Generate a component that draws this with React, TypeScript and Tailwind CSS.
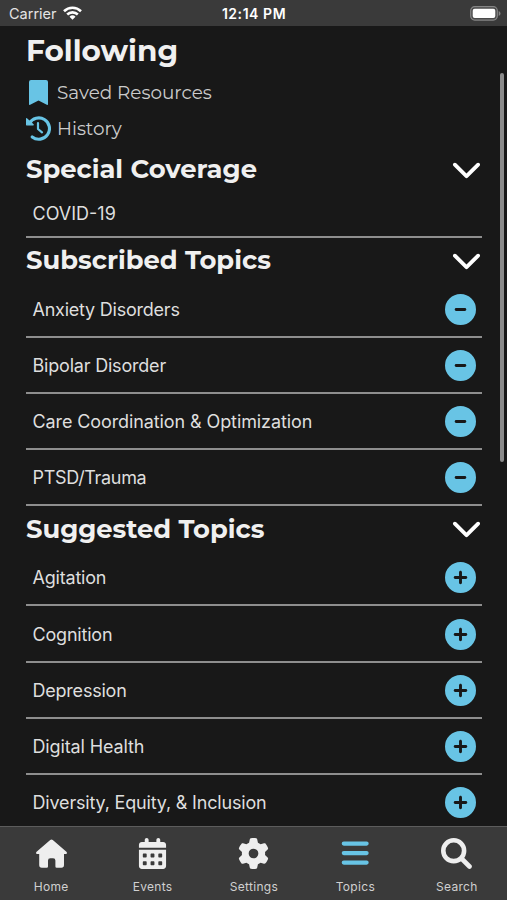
import React from 'react'
import { FaCalendarDays, FaChevronDown, FaCircleMinus, FaCirclePlus, FaGear } from 'react-icons/fa6'

interface Topic {
  name: string
  tracking: string
}

interface IconProps {
  className?: string
}

const subscribed: Topic[] = [
  { name: 'Anxiety Disorders', tracking: 'tracking-[-0.23px]' },
  { name: 'Bipolar Disorder', tracking: 'tracking-[-0.2px]' },
  { name: 'Care Coordination & Optimization', tracking: 'tracking-[-0.1px]' },
  { name: 'PTSD/Trauma', tracking: 'tracking-[-0.32px]' },
]

const suggested: Topic[] = [
  { name: 'Agitation', tracking: 'tracking-[-0.2px]' },
  { name: 'Cognition', tracking: 'tracking-[-0.2px]' },
  { name: 'Depression', tracking: 'tracking-[-0.22px]' },
  { name: 'Digital Health', tracking: 'tracking-[-0.12px]' },
  { name: 'Diversity, Equity, & Inclusion', tracking: 'tracking-[-0.18px]' },
]

const HomeIcon: React.FC<IconProps> = ({ className }) => (
  <svg viewBox="0 0 31 31" className={className} fill="currentColor">
    <path d="M14.2 2q1.3-1 2.6 0l13.6 11.8q.8.9.4 1.6t-1.4.7H28v11q0 2.6-2.6 2.6h-4.7q-1.3 0-1.3-1.3v-5.9q0-2.3-2.3-2.3h-2.8q-2.3 0-2.3 2.3v5.9q0 1.3-1.3 1.3H5.8q-2.6 0-2.6-2.6v-11H1.6q-1 0-1.4-.7t.4-1.6Z" />
  </svg>
)

const BarsIcon: React.FC<IconProps> = ({ className }) => (
  <svg viewBox="0 0 31 31" className={className} stroke="currentColor" strokeWidth="4.2" strokeLinecap="round">
    <path d="M3.8 5.6h22.8M3.8 15.1h22.8M3.8 24.6h22.8" />
  </svg>
)

const SearchIcon: React.FC<IconProps> = ({ className }) => (
  <svg viewBox="0 0 31 31" className={className} fill="none" stroke="currentColor" strokeLinecap="round">
    <circle cx="12.7" cy="12.7" r="10.4" strokeWidth="4.6" />
    <path d="m20.5 20.5 8 8" strokeWidth="4.6" />
  </svg>
)

const BookmarkIcon: React.FC<IconProps> = ({ className }) => (
  <svg viewBox="0 0 19 25" className={className} fill="currentColor">
    <path d="M2 0h15q2 0 2 2v22q0 1.3-1.2.7L9.5 20.4l-8.3 4.3Q0 25.3 0 24V2q0-2 2-2Z" />
  </svg>
)

const HistoryIcon: React.FC<IconProps> = ({ className }) => (
  <svg viewBox="0 0 25 25" className={className} fill="none" stroke="currentColor" strokeLinecap="round" strokeLinejoin="round">
    <path d="M3.4 7.4A10.7 10.7 0 1 1 6.2 21" strokeWidth="3.1" />
    <path d="M.6 2.6v6.2h6.6Z" fill="currentColor" strokeWidth="1.2" />
    <path d="M12 7v6l4 3.4" strokeWidth="2.2" />
  </svg>
)

const tabs = [
  { label: 'Home', icon: HomeIcon, size: 'h-[31px] w-[31px]', active: false },
  { label: 'Events', icon: FaCalendarDays, size: 'h-[31px] w-[31px]', active: false },
  { label: 'Settings', icon: FaGear, size: 'h-[31px] w-[31px]', active: false },
  { label: 'Topics', icon: BarsIcon, size: 'h-[31px] w-[31px]', active: true },
  { label: 'Search', icon: SearchIcon, size: 'h-[31px] w-[31px]', active: false },
]

const StatusBar: React.FC = () => (
  <div className="grid h-[25.5px] shrink-0 grid-cols-3 items-center bg-[#3a3a3a] pt-[2px] pl-[7px] pr-[6px] leading-none text-[#e4e4e4]">
    <div className="flex items-center gap-[6px] pl-[2px]">
      <span className="text-[14.5px]">Carrier</span>
      <svg viewBox="0 0 19 14" className="mb-[2px] h-[14px] w-[19px]" fill="none" stroke="#fff" strokeWidth="2.6">
        <path d="M1 5.2a12.2 12.2 0 0 1 17 0" />
        <path d="M4.2 8.5a7.6 7.6 0 0 1 10.6 0" />
        <path d="M9.5 13.8 6.5 10.8a4.3 4.3 0 0 1 6 0Z" fill="#fff" stroke="none" />
      </svg>
    </div>
    <span className="text-center text-[14px] font-semibold tracking-[0.55px] text-white">12:14 PM</span>
    <svg viewBox="0 0 31 15" className="mb-px h-[15px] w-[31px] justify-self-end">
      <rect x=".7" y=".7" width="26.6" height="13.4" rx="4" fill="#4a4a4a" stroke="#858585" strokeWidth="1.2" />
      <rect x="2.7" y="2.7" width="22.6" height="9.4" rx="2" fill="#fff" />
      <path d="M28.7 5v5q1.8-.8 1.8-2.5T28.7 5Z" fill="#858585" />
    </svg>
  </div>
)

const SectionHeader: React.FC<{ title: string }> = ({ title }) => (
  <div className="flex h-[44px] items-center justify-between">
    <h2 className="pt-px font-['Montserrat','Inter',sans-serif] text-[25.8px] font-bold leading-none text-[#f0f0f0]">{title}</h2>
    <FaChevronDown className="mb-px h-[31px] w-[31px] text-white" />
  </div>
)

const TopicRow: React.FC<{ topic: Topic; followed: boolean }> = ({ topic, followed }) => {
  const Icon = followed ? FaCircleMinus : FaCirclePlus
  return (
    <div className="flex h-[56.2px] shrink-0 items-center justify-between border-b-2 border-[#8e8e8e] pt-px pl-[6.5px] pr-[6px]">
      <span className={`text-[18px] text-[#dedede] ${topic.tracking}`}>{topic.name}</span>
      <Icon className="h-[31px] w-[31px] text-[#68c4e5]" />
    </div>
  )
}

const App: React.FC = () => {
  return (
    <div className="flex h-[900px] w-[507px] flex-col overflow-hidden bg-[#181818] font-['Inter',sans-serif]">
      <StatusBar />

      <div className="relative min-h-0 flex-1 overflow-hidden pl-[26px] pr-[25px]">
        <h1 className="h-[48px] pt-[7px] font-['Montserrat','Inter',sans-serif] text-[29.5px] font-bold leading-[34px] text-[#f0f0f0]">
          Following
        </h1>
        <div className="flex h-[37px] items-center font-['Montserrat','Inter',sans-serif]">
          <BookmarkIcon className="ml-[3px] h-[25px] w-[19px] text-[#68c4e5]" />
          <span className="ml-[9px] pt-px text-[18.4px] text-[#cccccc]">Saved Resources</span>
        </div>
        <div className="flex h-[36px] items-center font-['Montserrat','Inter',sans-serif]">
          <HistoryIcon className="h-[25px] w-[25px] text-[#68c4e5]" />
          <span className="ml-[6px] pt-px text-[18.4px] text-[#cccccc]">History</span>
        </div>

        <SectionHeader title="Special Coverage" />
        <div className="flex h-[47px] items-center border-b-2 border-[#8e8e8e] pt-px pl-[6.5px]">
          <span className="text-[18px] text-[#dedede]">COVID-19</span>
        </div>

        <SectionHeader title="Subscribed Topics" />
        {subscribed.map((topic) => (
          <TopicRow key={topic.name} topic={topic} followed />
        ))}

        <SectionHeader title="Suggested Topics" />
        {suggested.map((topic) => (
          <TopicRow key={topic.name} topic={topic} followed={false} />
        ))}

        {/* scroll indicator */}
        <div className="absolute top-[47px] right-[3px] h-[389px] w-[4px] rounded-full bg-[#8b8b8b]" />
      </div>

      <nav className="grid h-[74px] shrink-0 grid-cols-5 border-t border-[#5c5c5c] bg-[#3a3a3a]">
        {tabs.map(({ label, icon: Icon, size, active }) => (
          <div key={label} className="flex flex-col items-center pt-[10.5px] pl-px">
            <Icon className={`${size} ${active ? 'text-[#68c4e5]' : 'text-[#eeeeee]'}`} />
            <span className="mt-auto mb-[5px] text-[12px] leading-[16px] tracking-[0.3px] text-[#d0d0d0]">{label}</span>
          </div>
        ))}
      </nav>
    </div>
  )
}

export default App
